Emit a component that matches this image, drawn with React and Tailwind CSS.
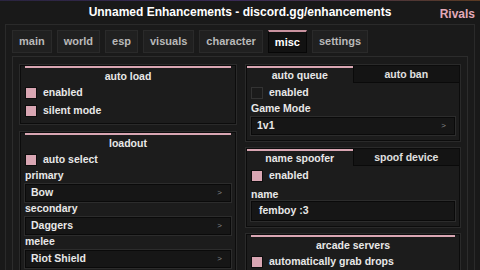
import React from 'react';

const font = { fontFamily: '"Liberation Sans", Arial, sans-serif' };

const tabs = ['main', 'world', 'esp', 'visuals', 'character', 'misc', 'settings'];

function Check({ on }) {
  return (
    <div
      className={`w-[12px] h-[12px] border ${
        on ? 'bg-[#d9a6b3] border-[#0d0d0d]' : 'bg-[#1b1b1b] border-[#333]'
      }`}
    />
  );
}

function Toggle({ on, label }) {
  return (
    <div className="flex items-center gap-[6px] h-[18px]">
      <Check on={on} />
      <span className="text-[10.5px] text-[#e8e8e8] font-bold">{label}</span>
    </div>
  );
}

function Dropdown({ value }) {
  return (
    <div className="h-[18px] bg-[#161616] border border-[#0a0a0a] outline outline-1 outline-[#2c2c2c] flex items-center justify-between px-[5px]">
      <span className="text-[10.5px] text-[#e8e8e8] font-bold">{value}</span>
      <span className="text-[8px] text-[#888] pr-[3px]">&gt;</span>
    </div>
  );
}

function Label({ children }) {
  return <div className="text-[10.5px] text-[#e8e8e8] font-bold h-[15px] leading-[13px]">{children}</div>;
}

function Card({ title, children }) {
  return (
    <div className="bg-[#1c1c1c] border border-[#0c0c0c] outline outline-1 outline-[#2a2a2a] px-[4px] pb-[3px]">
      <div className="h-[2px] bg-[#d9a6b3]" />
      <div className="text-center text-[10.5px] text-[#e8e8e8] font-bold h-[16px] leading-[16px]">{title}</div>
      {children}
    </div>
  );
}

function TabCard({ left, right, children }) {
  return (
    <div className="bg-[#1c1c1c] border border-[#0c0c0c] outline outline-1 outline-[#2a2a2a] pb-[5px]">
      <div className="flex h-[17px]">
        <div className="flex-1 border-t-2 border-[#d9a6b3] text-center text-[10.5px] text-[#e8e8e8] font-bold leading-[15px]">
          {left}
        </div>
        <div className="flex-1 bg-[#141414] border-l border-b border-[#0a0a0a] text-center text-[10.5px] text-[#e0e0e0] font-bold leading-[16px]">
          {right}
        </div>
      </div>
      <div className="px-[4px] pt-[1px]">{children}</div>
    </div>
  );
}

export default function App() {
  return (
    <div className="w-[480px] h-[270px] overflow-hidden bg-[#191919] relative" style={font}>
      <div className="absolute top-0 left-0 right-0 h-[1px] bg-gradient-to-r from-[#2a2440] via-[#3a2a55] to-[#5a3a22]" />
      <div className="h-[24px] flex items-center justify-center relative">
        <span className="text-[12px] font-bold text-white">
          Unnamed Enhancements - discord.gg/enhancements
        </span>
        <span className="absolute right-[5px] top-[5px] text-[12px] font-bold text-[#e2a9b8]">Rivals</span>
      </div>
      <div className="mx-[5px] h-[260px] border border-[#2a2a2a] bg-[#1a1a1a] px-[6px] pt-[5px] flex gap-[3px]">
        <div className="flex-1">
          <div className="flex gap-[5px] h-[23px]">
            {tabs.map((t) => (
              <div
                key={t}
                className={`px-[6px] flex items-center text-[11px] font-bold border ${
                  t === 'misc'
                    ? 'bg-[#121212] border-[#070707] border-t-2 border-t-[#c9929f] text-white'
                    : 'bg-[#202020] border-[#2a2a2a] text-[#b9b9b9]'
                }`}
              >
                {t}
              </div>
            ))}
          </div>
          <div className="mt-[3px] h-[230px] border border-[#2c2c2c] bg-[#1a1a1a] px-[7px] pt-[8px] flex gap-[10px]">
            <div className="w-[216px] flex flex-col gap-[8px]">
              <Card title="auto load">
                <Toggle on label="enabled" />
                <Toggle on label="silent mode" />
              </Card>
              <Card title="loadout">
                <Toggle on label="auto select" />
                <Label>primary</Label>
                <Dropdown value="Bow" />
                <Label>secondary</Label>
                <Dropdown value="Daggers" />
                <Label>melee</Label>
                <Dropdown value="Riot Shield" />
              </Card>
            </div>
            <div className="w-[214px] flex flex-col gap-[7px]">
              <TabCard left="auto queue" right="auto ban">
                <Toggle label="enabled" />
                <Label>Game Mode</Label>
                <Dropdown value="1v1" />
              </TabCard>
              <TabCard left="name spoofer" right="spoof device">
                <Toggle on label="enabled" />
                <div className="h-[16px] leading-[18px] text-[10.5px] text-[#e8e8e8] font-bold">name</div>
                <div className="h-[20px] bg-[#161616] border border-[#0a0a0a] outline outline-1 outline-[#2c2c2c] flex items-center px-[7px]">
                  <span className="text-[10.5px] text-[#e8e8e8] font-bold">femboy :3</span>
                </div>
              </TabCard>
              <Card title="arcade servers">
                <Toggle on label="automatically grab drops" />
              </Card>
            </div>
          </div>
        </div>
        <div className="w-[1px] mt-[28px] bg-[#2c2c2c]" />
      </div>
    </div>
  );
}
